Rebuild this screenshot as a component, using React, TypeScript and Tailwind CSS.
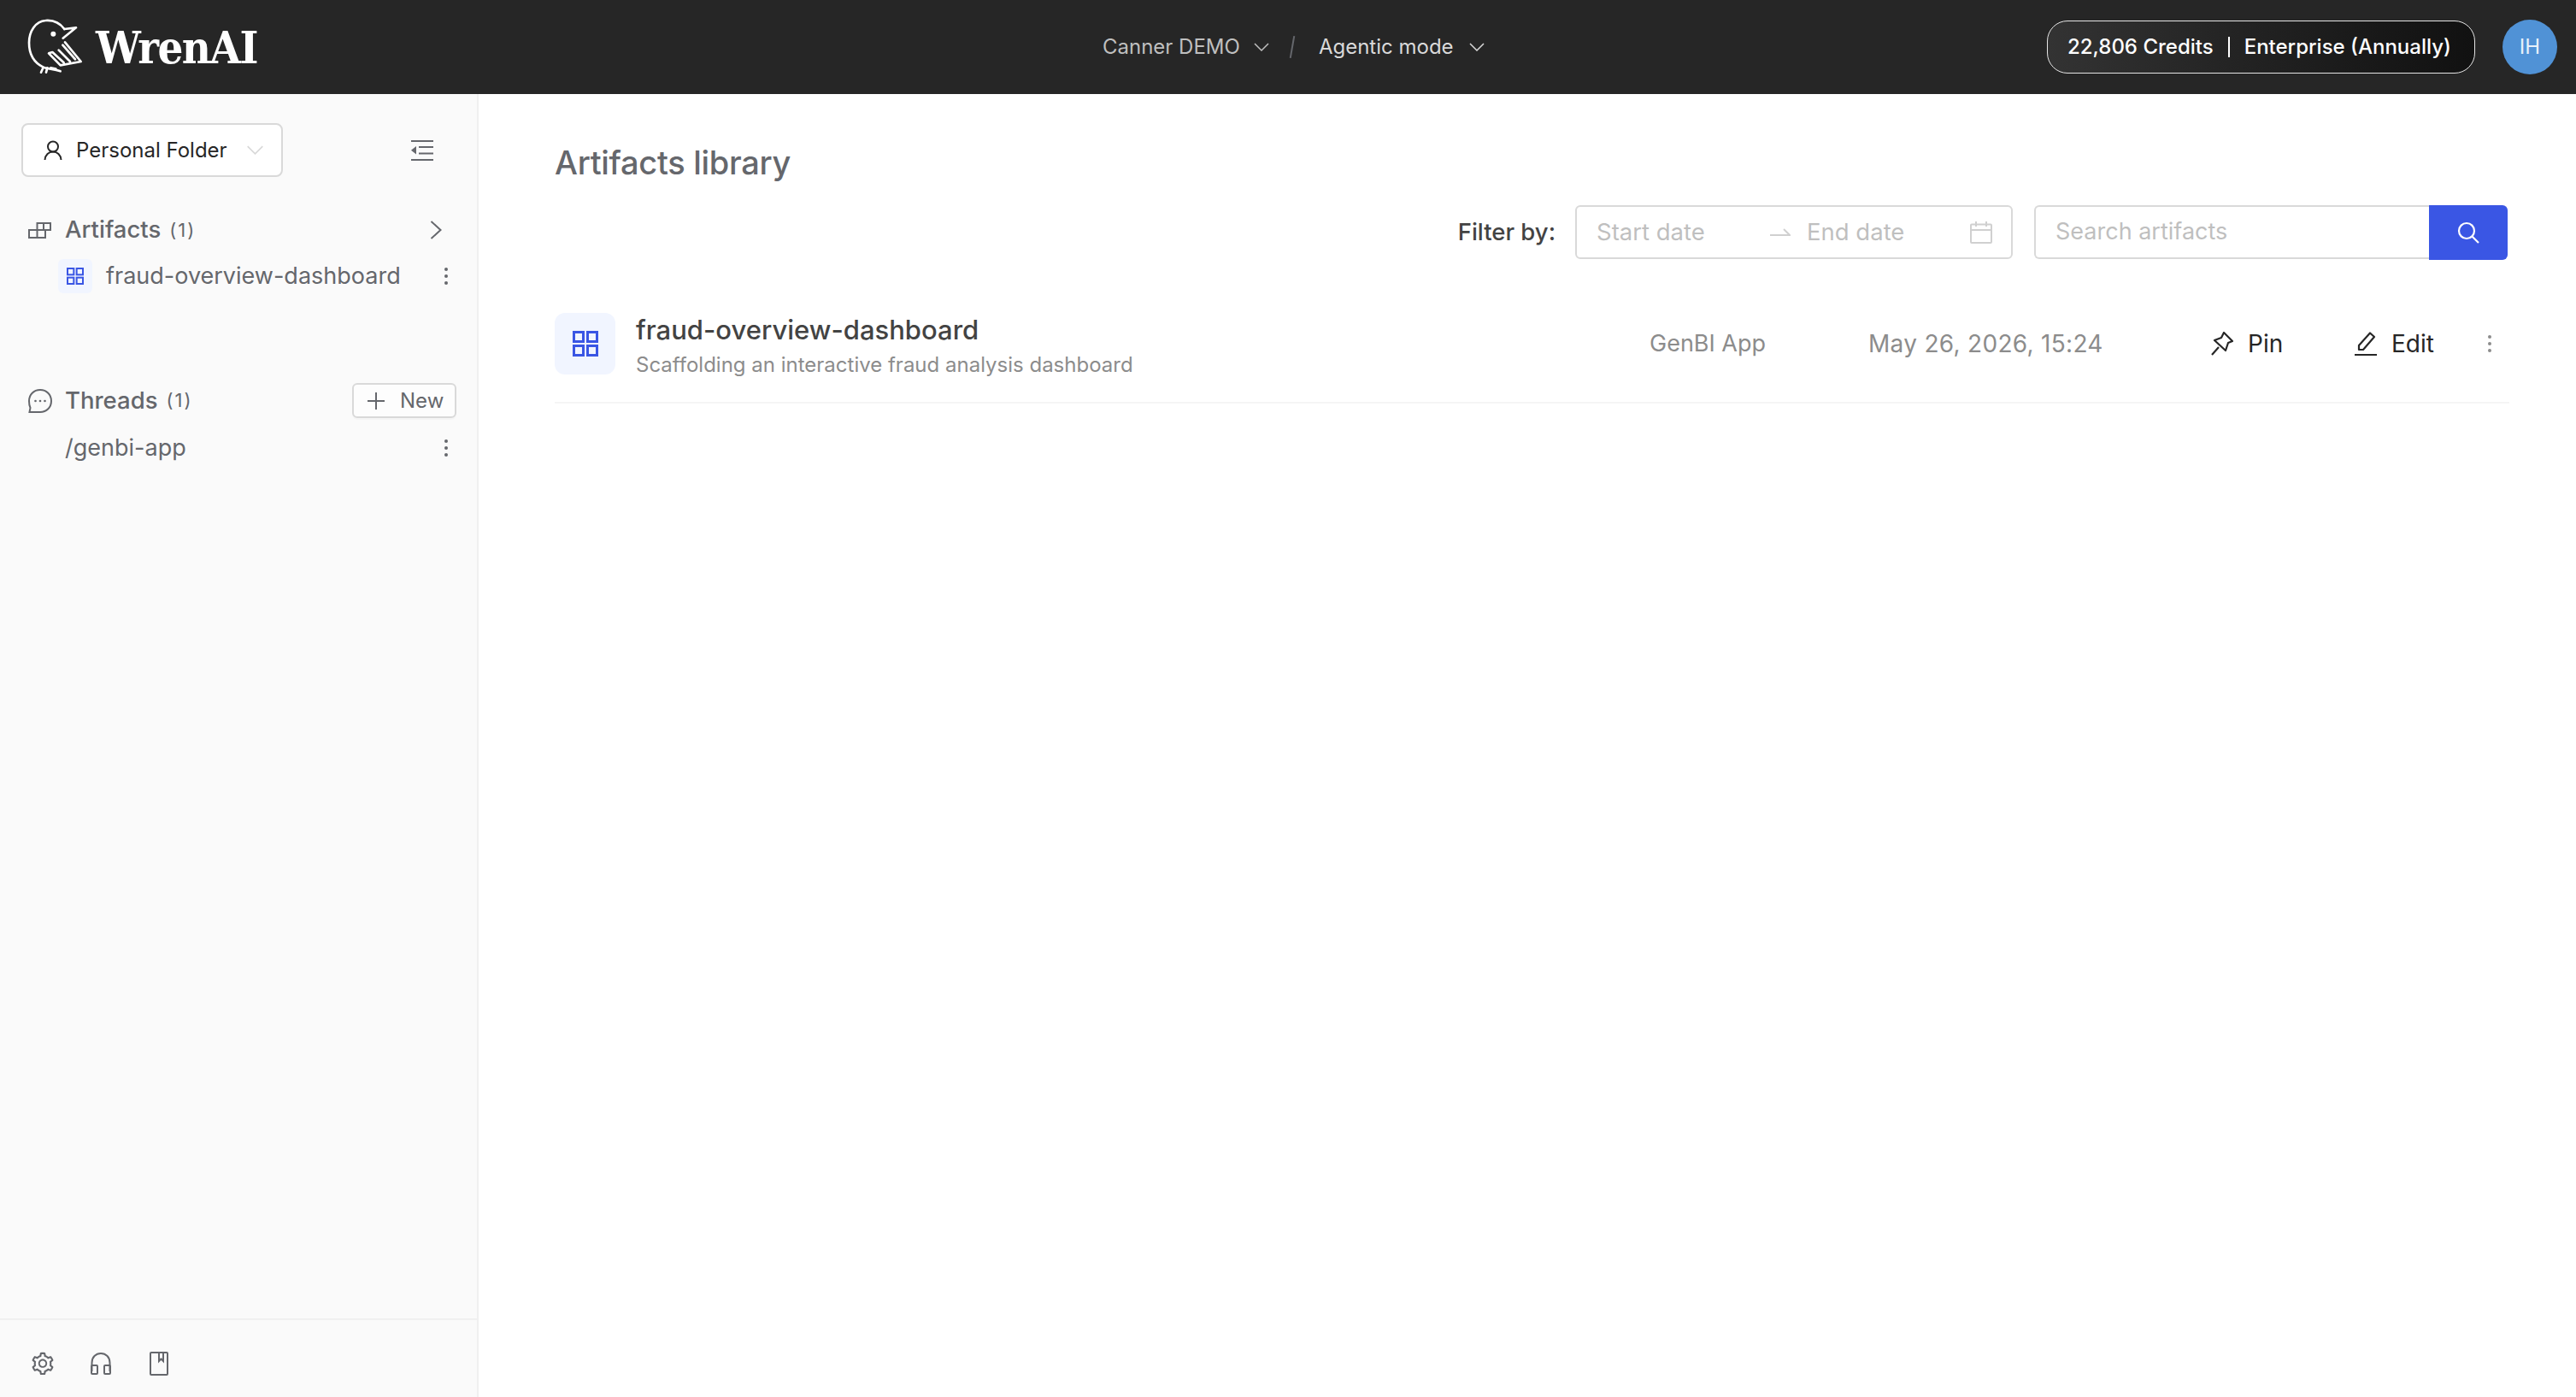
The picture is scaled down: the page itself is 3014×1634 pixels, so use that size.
const gray = "#65676c";

function Logo() {
  return (
    <svg width="120" height="90" viewBox="0 0 360 270" fill="none" stroke="#fff" strokeWidth="8" strokeLinecap="round" strokeLinejoin="round" className="absolute left-[20px] top-[10px]">
      <path d="M166 72 C150 50 125 40 100 42 C65 44 42 80 42 120 C42 160 60 190 92 206 C110 212 130 212 152 220" />
      <path d="M166 72 L207 67 L161 104" />
      <path d="M168 118 L224 186 L152 199 L111 157 L124 153 L164 190" />
      <path d="M146 146 L186 186 M160 128 L204 178" />
      <path d="M92 206 L84 224 M106 208 L102 224 M118 208 L136 212" />
      <circle cx="127" cy="89" r="9" fill="#fff" stroke="none" />
    </svg>
  );
}

function Chevron({ className }: { className?: string }) {
  return (
    <svg viewBox="0 0 18 10" fill="none" stroke="currentColor" strokeWidth="1.5" className={className}>
      <path d="M1 1 L9 9 L17 1" />
    </svg>
  );
}

function Grid({ size, stroke = 2 }: { size: number; stroke?: number }) {
  return (
    <svg width={size} height={size} viewBox="0 0 30 30" fill="none" stroke="#3a56e4" strokeWidth={stroke * (30 / size)}>
      <rect x="1.5" y="1.5" width="11" height="11" />
      <rect x="17.5" y="1.5" width="11" height="11" />
      <rect x="1.5" y="17.5" width="11" height="11" />
      <rect x="17.5" y="17.5" width="11" height="11" />
    </svg>
  );
}

function Dots({ color = "#65676c" }: { color?: string }) {
  return (
    <svg width="6" height="22" viewBox="0 0 6 22" fill={color}>
      <circle cx="3" cy="3" r="2" />
      <circle cx="3" cy="11" r="2" />
      <circle cx="3" cy="19" r="2" />
    </svg>
  );
}

export default function App() {
  return (
    <div className="flex h-[1634px] w-full flex-col overflow-hidden bg-white font-['Inter',sans-serif]">
      <header className="relative flex h-[110px] shrink-0 items-center bg-[#262626]">
        <Logo />
        <span className="ml-[112px] scale-y-110 font-['DejaVu_Serif',serif] text-[47px] leading-none font-bold tracking-[-1.5px] text-white">WrenAI</span>
        <div className="ml-[989px] flex items-center">
          <span className="text-[24px] text-[#bfbfbf]">Canner DEMO</span>
          <Chevron className="ml-[16px] h-[10px] w-[18px] text-[#bfbfbf]" />
          <span className="ml-[26px] h-[26px] w-[2px] rotate-[10deg] bg-[#65676c]" />
          <span className="ml-[30px] text-[24px] text-[#d9d9d9]">Agentic mode</span>
          <Chevron className="ml-[18px] h-[10px] w-[18px] text-[#d9d9d9]" />
        </div>
        <div className="ml-auto flex items-center pr-[22px]">
          <div className="flex h-[62px] w-[501px] items-center rounded-[24px] border-[1.5px] border-[#e5e5e5] bg-gradient-to-r from-[#333333] to-[#111111] pl-[23px] text-[24px] font-medium text-white">
            <span>22,806 Credits</span>
            <span className="mx-[17px] h-[24px] w-[2px] bg-white" />
            <span>Enterprise (Annually)</span>
          </div>
          <div className="ml-[32px] flex h-[64px] w-[64px] items-center justify-center rounded-full bg-[#5092d6] text-[24px] text-[#e8f1fa]">IH</div>
        </div>
      </header>
      <div className="flex min-h-0 flex-1">
        <aside className="flex w-[560px] shrink-0 flex-col border-r-2 border-[#f0f0f0] bg-[#fafafa]">
          <div className="flex-1 pt-[34px]">
            <div className="flex h-[63px] items-center pl-[25px]">
              <div className="flex h-[63px] w-[306px] items-center rounded-[8px] border-2 border-[#d9d9d9] bg-white pl-[24px]">
                <svg width="22" height="24" viewBox="0 0 22 24" fill="none" stroke="#262626" strokeWidth="2">
                  <circle cx="11" cy="7.5" r="6" />
                  <path d="M1.5 23 C2 17 6 13.5 11 13.5 C16 13.5 20 17 20.5 23" />
                </svg>
                <span className="ml-[16px] text-[24px] whitespace-nowrap text-[#262626]">Personal Folder</span>
                <Chevron className="ml-[22px] h-[11px] w-[21px] text-[#d9d9d9]" />
              </div>
              <svg width="26" height="24" viewBox="0 0 26 24" fill="#65676c" className="ml-[150px]">
                <rect x="0" y="0" width="26" height="2" />
                <rect x="9" y="7" width="17" height="2" />
                <rect x="9" y="14.5" width="17" height="2" />
                <rect x="0" y="22" width="26" height="2" />
                <path d="M0 11.7 L6 7 V16.5 Z" />
              </svg>
            </div>
            <div className="mt-[44px] flex h-[36px] items-center pl-[33px]">
              <svg width="27" height="19" viewBox="0 0 27 19" fill="none" stroke="#65676c" strokeWidth="2">
                <path d="M1 18 H20 V9 H1 Z M10.5 9 V18 M10.5 9 V1 H26 V9 H20 M18 1 V9" />
              </svg>
              <span className="ml-[16px] text-[27.5px] font-medium text-[#65676c]">Artifacts</span>
              <span className="ml-[10px] text-[22px] tracking-[2px] text-[#65676c]">(1)</span>
              <svg width="14" height="22" viewBox="0 0 14 22" fill="none" stroke="#65676c" strokeWidth="2" className="ml-auto mr-[41px]">
                <path d="M1.5 1 L12.5 11 L1.5 21" />
              </svg>
            </div>
            <div className="mt-[16px] flex h-[40px] items-center pl-[68px]">
              <div className="flex h-[40px] w-[40px] items-center justify-center rounded-[6px] bg-[#f1f5ff]">
                <Grid size={20} />
              </div>
              <span className="ml-[16px] text-[27px] whitespace-nowrap text-[#65676c]">fraud-overview-dashboard</span>
              <span className="ml-auto mr-[33px] flex"><Dots /></span>
            </div>
            <div className="mt-[105px] flex h-[41px] items-center pl-[33px]">
              <svg width="28" height="28" viewBox="0 0 28 28" fill="none" stroke="#65676c" strokeWidth="2">
                <path d="M14 1 C21.5 1 27 6.5 27 14 C27 21.5 21.5 27 14 27 H1.5 L2.5 22 C1.5 20 1 17 1 14 C1 6.5 6.5 1 14 1 Z" />
                <circle cx="8.5" cy="14" r="1.3" fill="#65676c" stroke="none" />
                <circle cx="14" cy="14" r="1.3" fill="#65676c" stroke="none" />
                <circle cx="19.5" cy="14" r="1.3" fill="#65676c" stroke="none" />
              </svg>
              <span className="ml-[15px] text-[27.5px] font-medium text-[#65676c]">Threads</span>
              <span className="ml-[10px] text-[22px] tracking-[2px] text-[#65676c]">(1)</span>
              <div className="ml-auto mr-[24px] flex h-[41px] w-[122px] items-center rounded-[6px] border-2 border-[#d9d9d9] bg-white/50 pl-[16px] text-[24px] text-[#65676c] shadow-[0_2px_0_rgba(0,0,0,0.02)]">
                <svg width="20" height="20" viewBox="0 0 20 20" fill="none" stroke="#65676c" strokeWidth="2">
                  <path d="M10 0 V20 M0 10 H20" />
                </svg>
                <span className="ml-[18px]">New</span>
              </div>
            </div>
            <div className="mt-[15px] flex h-[40px] items-center pl-[76px]">
              <span className="text-[27px] text-[#65676c]">/genbi-app</span>
              <span className="ml-auto mr-[33px] flex"><Dots /></span>
            </div>
          </div>
          <div className="flex h-[92px] shrink-0 items-center border-t-2 border-[#f0f0f0] pt-[12px] pl-[35px]">
            <svg width="30" height="30" viewBox="0 0 1024 1024" fill={gray}>
              <path d="M924.8 625.7l-65.5-56c3.1-19 4.7-38.4 4.7-57.8s-1.6-38.8-4.7-57.8l65.5-56a32.03 32.03 0 0 0 9.3-35.2l-.9-2.6a443.74 443.74 0 0 0-79.7-137.9l-1.8-2.1a32.12 32.12 0 0 0-35.1-9.5l-81.3 28.9c-30-24.6-63.5-44-99.7-57.6l-15.7-85a32.05 32.05 0 0 0-25.8-25.7l-2.7-.5c-52.1-9.4-106.9-9.4-159 0l-2.7.5a32.05 32.05 0 0 0-25.8 25.7l-15.8 85.4a351.86 351.86 0 0 0-99 57.4l-81.9-29.1a32 32 0 0 0-35.1 9.5l-1.8 2.1a446.02 446.02 0 0 0-79.7 137.9l-.9 2.6c-4.5 12.5-.8 26.5 9.3 35.2l66.3 56.6c-3.1 18.8-4.6 38-4.6 57.1 0 19.2 1.5 38.4 4.6 57.1L99 625.5a32.03 32.03 0 0 0-9.3 35.2l.9 2.6c18.1 50.4 44.9 96.9 79.7 137.9l1.8 2.1a32.12 32.12 0 0 0 35.1 9.5l81.9-29.1c29.8 24.5 63.1 43.9 99 57.4l15.8 85.4a32.05 32.05 0 0 0 25.8 25.7l2.7.5a449.4 449.4 0 0 0 159 0l2.7-.5a32.05 32.05 0 0 0 25.8-25.7l15.7-85a350 350 0 0 0 99.7-57.6l81.3 28.9a32 32 0 0 0 35.1-9.5l1.8-2.1c34.8-41.1 61.6-87.5 79.7-137.9l.9-2.6c4.5-12.3.8-26.3-9.3-35zM788.3 465.9c2.5 15.1 3.8 30.6 3.8 46.1s-1.3 31-3.8 46.1l-6.6 40.1 74.7 63.9a370.03 370.03 0 0 1-42.6 73.6L721 702.8l-31.4 25.8c-23.9 19.6-50.5 35-79.3 45.8l-38.1 14.3-17.9 97a377.5 377.5 0 0 1-85 0l-17.9-97.2-37.8-14.5c-28.5-10.8-55-26.2-78.7-45.7l-31.4-25.9-93.4 33.2c-17-22.9-31.2-47.6-42.6-73.6l75.5-64.5-6.5-40c-2.4-14.9-3.7-30.3-3.7-45.5 0-15.3 1.2-30.6 3.7-45.5l6.5-40-75.5-64.5c11.3-26.1 25.6-50.7 42.6-73.6l93.4 33.2 31.4-25.9c23.7-19.5 50.2-34.9 78.7-45.7l37.9-14.3 17.9-97.2c28.1-3.2 56.8-3.2 85 0l17.9 97 38.1 14.3c28.7 10.8 55.4 26.2 79.3 45.8l31.4 25.8 92.8-32.9c17 22.9 31.2 47.6 42.6 73.6L781.8 426l6.5 39.9zM512 326c-97.2 0-176 78.8-176 176s78.8 176 176 176 176-78.8 176-176-78.8-176-176-176zm79.2 255.2A111.6 111.6 0 0 1 512 614c-29.9 0-58-11.7-79.2-32.8A111.6 111.6 0 0 1 400 502c0-29.9 11.7-58 32.8-79.2C454 401.6 482.1 390 512 390c29.9 0 58 11.6 79.2 32.8A111.6 111.6 0 0 1 624 502c0 29.9-11.7 58-32.8 79.2z" />
            </svg>
            <svg width="24" height="26" viewBox="0 0 24 26" fill="none" stroke={gray} strokeWidth="2" className="ml-[41px]">
              <path d="M1.5 22 V12 C1.5 5.5 6 1 12 1 C18 1 22.5 5.5 22.5 12 V22" />
              <rect x="1" y="15" width="7" height="10" rx="1" />
              <rect x="16" y="15" width="7" height="10" rx="1" />
            </svg>
            <svg width="22" height="28" viewBox="0 0 22 28" fill="none" stroke={gray} strokeWidth="2" className="ml-[45px]">
              <rect x="1" y="1" width="20" height="26" rx="1" />
              <path d="M11 1 V11 L13.5 8.5 L16 11 V1" />
            </svg>
          </div>
        </aside>
        <main className="min-w-0 flex-1 pr-[78px] pl-[89px]">
          <h1 className="mt-[60px] h-[40px] text-[38px] leading-[40px] font-medium tracking-[-0.3px] text-[#65676c]">Artifacts library</h1>
          <div className="mt-[30px] flex h-[63px] items-center justify-end pr-[2px]">
            <span className="mr-[23px] text-[27.5px] font-medium text-[#434343]">Filter by:</span>
            <div className="flex h-[63px] w-[512px] items-center rounded-[6px] border-2 border-[#d9d9d9] pl-[23px] text-[27.5px] text-[#bfbfbf]">
              <span className="w-[203px]">Start date</span>
              <svg width="24" height="10" viewBox="0 0 24 10" fill="none" stroke="#d0d0d0" strokeWidth="2"><path d="M0 8 H23 L16 1" /></svg>
              <span className="ml-[19px] w-[191px]">End date</span>
              <svg width="26" height="26" viewBox="0 0 26 26" fill="none" stroke="#d0d0d0" strokeWidth="2">
                <rect x="1" y="3.5" width="24" height="21.5" rx="1" />
                <path d="M1 10 H25 M7 0 V6 M19 0 V6" />
              </svg>
            </div>
            <div className="ml-[25px] flex h-[63px] w-[462px] items-center rounded-l-[6px] border-2 border-r-0 border-[#d9d9d9] pl-[23px] text-[27px] text-[#bfbfbf]">Search artifacts</div>
            <div className="flex h-[64px] w-[92px] items-center justify-center rounded-r-[6px] bg-[#3a56e4]">
              <svg width="26" height="26" viewBox="0 0 26 26" fill="none" stroke="#fff" strokeWidth="2.2">
                <circle cx="11" cy="11" r="9" />
                <path d="M17.5 17.5 L25 25" />
              </svg>
            </div>
          </div>
          <div className="mt-[63px] flex items-start border-b-2 border-[#f5f5f5] pb-[28px]">
            <div className="flex h-[72px] w-[71px] items-center justify-center rounded-[12px] bg-[#f1f5ff]">
              <Grid size={30} stroke={3} />
            </div>
            <div className="ml-[24px] flex flex-col">
              <span className="text-[31px] leading-[40px] font-medium text-[#434343]">fraud-overview-dashboard</span>
              <span className="mt-[6px] text-[24px] leading-[30px] text-[#8c8c8c]">Scaffolding an interactive fraud analysis dashboard</span>
            </div>
            <div className="ml-auto flex h-[72px] items-center text-[28px]">
              <span className="w-[256px] text-[27px] text-[#8c8c8c]">GenBI App</span>
              <span className="w-[401px] tracking-[0.3px] text-[#8c8c8c]">May 26, 2026, 15:24</span>
              <svg width="26" height="28" viewBox="0 0 26 28" fill="none" stroke="#262626" strokeWidth="2.2" strokeLinejoin="round">
                <path d="M1 27 L9 18 M15 1 L25 11 L20 13 L17 22 L4 10 L12 7 Z" />
              </svg>
              <span className="ml-[17px] w-[124px] text-[#262626]">Pin</span>
              <svg width="28" height="28" viewBox="0 0 28 28" fill="none" stroke="#262626" strokeWidth="2.2" strokeLinejoin="round">
                <path d="M1 27 H27 M6 21 L6 16 L19 1.5 L24 6 L11 21 Z" />
              </svg>
              <span className="ml-[16px] w-[112px] text-[#262626]">Edit</span>
              <span className="mr-[20px] flex"><Dots color="#8c8c8c" /></span>
            </div>
          </div>
        </main>
      </div>
    </div>
  );
}
